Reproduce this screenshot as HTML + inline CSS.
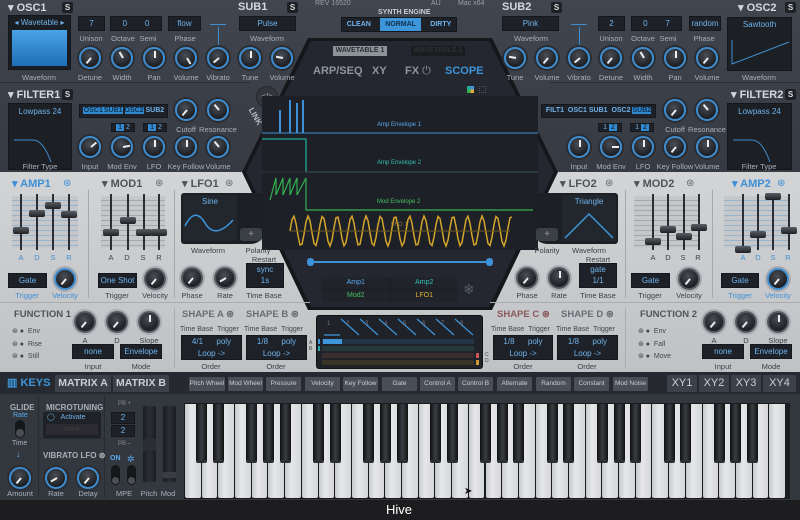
<!DOCTYPE html>
<html><head><meta charset="utf-8"><style>
*{box-sizing:border-box;margin:0;padding:0}
body{width:800px;height:520px;overflow:hidden;background:#1d1d1f;font-family:"Liberation Sans",sans-serif;position:relative}
.a{position:absolute}
.top{left:0;top:0;width:800px;height:174px;background:linear-gradient(#41464e,#363a42)}
.mid{left:0;top:172px;width:800px;height:200px;background:linear-gradient(#d2d4d6,#bfc1c4)}
.h{position:absolute;font-weight:bold;font-size:11px;color:#d4d8de;white-space:nowrap}
.hd{color:#50545a}
.hb{color:#3d8fd6}
.s{position:absolute;width:11px;height:11px;background:#1e2126;color:#ddd;font-size:8px;font-weight:bold;text-align:center;line-height:11px;border-radius:2px}
.box{position:absolute;background:#1e2228;border:1px solid #14171b;color:#6fb3ec;font-size:8px;text-align:center;white-space:nowrap}
.lb{position:absolute;font-size:7.5px;color:#a9b0b9;text-align:center;white-space:nowrap;transform:translateX(-50%)}
.ld{color:#3c4046}
.lbb{color:#3d8fd6}
.k{position:absolute;width:22px;height:22px;border-radius:50%;border:2px solid #3e8dd0;background:radial-gradient(circle at 45% 35%,#4a4e55,#1d1f23 70%);box-shadow:0 0 0 2px #2a2e34}
.kl{border-color:#55595f;box-shadow:0 0 0 2px #a9acb0}
.kl.bl{border-color:#3e8dd0}
.k i{position:absolute;left:9px;top:2px;width:2px;height:7px;background:#eee;transform-origin:1px 7px}
.fd{position:absolute;width:2px;background:#2a2d32}
.fh{position:absolute;width:16px;height:7px;background:linear-gradient(#5a5e64,#1e2024);border-radius:2px;margin-left:-7px}
.tb{position:absolute;height:14px;top:377px;background:#4a4f57;color:#c9ced6;font-size:6.5px;text-align:center;line-height:14px;border-radius:1px;white-space:nowrap;overflow:hidden}
</style></head><body>
<div class="a top"></div>
<div class="a mid"></div>
<div class="a" style="left:0;top:82px;width:250px;height:1px;background:#2b2f35"></div>
<div class="a" style="left:550px;top:82px;width:250px;height:1px;background:#2b2f35"></div>

<!-- OSC1 -->
<div class="h" style="left:8px;top:1px">▾ OSC1</div><div class="s" style="left:62px;top:2px">S</div>
<div class="box" style="left:8px;top:15px;width:63px;height:55px;background:#1a1d22"><div style="color:#6fb3ec;font-size:8px;margin-top:2px">◂ Wavetable ▸</div><div style="margin:3px 3px;height:36px;background:linear-gradient(#4aa3e6,#1e6fb6)"></div></div>
<div class="lb" style="left:39px;top:73px">Waveform</div>
<div class="box" style="left:78px;top:16px;width:27px;height:15px;line-height:13px">7</div>
<div class="box" style="left:110px;top:16px;width:52px;height:15px;line-height:13px">0&nbsp;&nbsp;&nbsp;&nbsp;&nbsp;&nbsp;&nbsp;&nbsp;0</div>
<div class="box" style="left:168px;top:16px;width:33px;height:15px;line-height:13px">flow</div>
<div class="box" style="left:239px;top:16px;width:57px;height:15px;line-height:13px">Pulse</div>
<div class="h" style="left:238px;top:1px">SUB1</div><div class="s" style="left:287px;top:2px">S</div>
<div class="lb" style="left:91px;top:34px">Unison</div><div class="lb" style="left:123px;top:34px">Octave</div><div class="lb" style="left:148px;top:34px">Semi</div><div class="lb" style="left:185px;top:34px">Phase</div><div class="lb" style="left:267px;top:34px">Waveform</div>
<div class="a" style="left:218px;top:27px;width:1px;height:20px;background:#3e8dd0"></div>
<div class="a" style="left:210px;top:24px;width:16px;height:1px;background:#3e8dd0"></div>

<!-- FILTER1 -->
<div class="h" style="left:8px;top:88px">▾ FILTER1</div><div class="s" style="left:62px;top:89px">S</div>
<div class="box" style="left:8px;top:103px;width:64px;height:67px;background:#1c1f24"><div style="margin-top:3px">Lowpass 24</div><svg width="60" height="44" style="position:absolute;left:2px;top:20px"><path d="M3 16 H22 Q32 16 40 38" stroke="#3e8dd0" fill="none" stroke-width="1"/></svg></div>
<div class="lb" style="left:40px;top:162px">Filter Type</div>
<div class="box" style="left:79px;top:104px;width:89px;height:14px;line-height:12px;font-weight:bold;font-size:7px"><span style="background:#2f8ad2;color:#12324d;padding:0 1px">OSC1</span><span style="background:#2f8ad2;color:#12324d">SUB1</span> <span style="background:#2f8ad2;color:#12324d">OSC2</span> SUB2</div>
<div class="box" style="left:111px;top:123px;width:24px;height:9px;line-height:8px;font-size:7px"><span style="background:#2f8ad2;color:#111;padding:0 2px">1</span> 2</div>
<div class="box" style="left:143px;top:123px;width:24px;height:9px;line-height:8px;font-size:7px"><span style="background:#2f8ad2;color:#111;padding:0 2px">1</span> 2</div>
<div class="a" style="left:256px;top:86px;width:22px;height:22px;border-radius:50%;background:#33373d;border:1px solid #24272c;color:#aaa;font-size:8px;text-align:center;line-height:20px">&lt;/&gt;</div>
<div class="a" style="left:246px;top:112px;font-size:8px;font-weight:bold;color:#b8bdc4;transform:rotate(60deg)">LINK</div>

<!-- OSC2 mirror -->
<div class="h" style="left:738px;top:1px">▾ OSC2</div><div class="s" style="left:785px;top:2px">S</div>
<div class="box" style="left:727px;top:17px;width:65px;height:54px;background:#1c1f24"><div style="margin-top:2px">Sawtooth</div><svg width="62" height="36" style="position:absolute;left:1px;top:14px"><path d="M3 32 V8 V32 L60 10" stroke="#3e8dd0" fill="none"/></svg></div>
<div class="lb" style="left:759px;top:73px">Waveform</div>
<div class="h" style="left:502px;top:1px">SUB2</div><div class="s" style="left:551px;top:2px">S</div>
<div class="box" style="left:502px;top:16px;width:57px;height:15px;line-height:13px">Pink</div>
<div class="box" style="left:598px;top:16px;width:27px;height:15px;line-height:13px">2</div>
<div class="box" style="left:631px;top:16px;width:51px;height:15px;line-height:13px">0&nbsp;&nbsp;&nbsp;&nbsp;&nbsp;&nbsp;&nbsp;&nbsp;7</div>
<div class="box" style="left:689px;top:16px;width:32px;height:15px;line-height:13px">random</div>
<div class="lb" style="left:531px;top:34px">Waveform</div><div class="lb" style="left:611px;top:34px">Unison</div><div class="lb" style="left:643px;top:34px">Octave</div><div class="lb" style="left:668px;top:34px">Semi</div><div class="lb" style="left:704px;top:34px">Phase</div>
<div class="a" style="left:579px;top:27px;width:1px;height:20px;background:#3e8dd0"></div>
<div class="a" style="left:571px;top:24px;width:16px;height:1px;background:#3e8dd0"></div>
<div class="h" style="left:731px;top:88px">▾ FILTER2</div><div class="s" style="left:785px;top:89px">S</div>
<div class="box" style="left:727px;top:103px;width:65px;height:67px;background:#1c1f24"><div style="margin-top:3px">Lowpass 24</div><svg width="60" height="44" style="position:absolute;left:2px;top:20px"><path d="M3 16 H22 Q32 16 40 38" stroke="#3e8dd0" fill="none"/></svg></div>
<div class="lb" style="left:759px;top:162px">Filter Type</div>
<div class="box" style="left:541px;top:104px;width:115px;height:14px;line-height:12px;font-weight:bold;font-size:7px">FILT1 &nbsp;OSC1 SUB1 &nbsp;OSC2 <span style="background:#2f8ad2;color:#12324d">SUB2</span></div>
<div class="box" style="left:598px;top:123px;width:24px;height:9px;line-height:8px;font-size:7px">1 <span style="background:#2f8ad2;color:#111;padding:0 2px">2</span></div>
<div class="box" style="left:630px;top:123px;width:24px;height:9px;line-height:8px;font-size:7px">1 <span style="background:#2f8ad2;color:#111;padding:0 2px">2</span></div>

<!-- center header -->
<div class="a" style="left:315px;top:0;font-size:7px;color:#9aa1a9">REV 16520</div>
<div class="a" style="left:431px;top:0;font-size:7px;color:#9aa1a9">AU</div>
<div class="a" style="left:458px;top:0;font-size:7px;color:#9aa1a9">Mac x64</div>
<div class="a" style="left:378px;top:9px;font-size:7px;font-weight:bold;color:#c8cdd4">SYNTH ENGINE</div>
<div class="box" style="left:341px;top:17px;width:116px;height:15px;font-weight:bold;font-size:7px;line-height:13px;display:flex;justify-content:space-around;align-items:center"><span>CLEAN</span><span style="background:#3d95da;color:#12324d;padding:0 5px">NORMAL</span><span>DIRTY</span></div>

<!-- hexagon -->
<svg class="a" style="left:0;top:0" width="800" height="372">
<polygon points="308,38 492,38 558,172 492,310 308,310 242,172" fill="#15171b"/>
<polygon points="311,41 489,41 554,172 489,307 311,307 246,172" fill="#24272f"/>
<rect x="262" y="96" width="276" height="154" fill="#1d2027"/>
<line x1="262" y1="133" x2="538" y2="133" stroke="#3d8fd6"/>
<path d="M280 133 V110 M290 133 V100 M297 133 V103 M303 133 V100 V133" stroke="#3d8fd6" stroke-width="2"/>
<path d="M262 139 H306 V172 H538" stroke="#23a89a" fill="none" stroke-width="1.3"/>
<line x1="262" y1="172" x2="538" y2="172" stroke="#333"/>
<path d="M270 200 L276 178 L276 195 L283 178 L283 195 L290 178 L290 195 L297 178 L297 195 L306 178 V210 H538" stroke="#35b04e" fill="none" stroke-width="1.2"/>
<path id="sn" d="" stroke="#d4a52a" fill="none" stroke-width="1.5"/>
<line x1="290" y1="231" x2="510" y2="231" stroke="#6b5820"/>
<line x1="312" y1="262" x2="488" y2="262" stroke="#3d8fd6" stroke-width="2"/>
<rect x="307" y="258" width="7" height="8" rx="3" fill="#3d8fd6"/><rect x="486" y="258" width="7" height="8" rx="3" fill="#3d8fd6"/>
</svg>
<div class="a" style="left:333px;top:46px;width:54px;height:10px;background:#8e9299;color:#2a2d33;font-size:7px;font-weight:bold;text-align:center;line-height:10px">WAVETABLE 1</div>
<div class="a" style="left:411px;top:46px;width:54px;height:10px;background:#1a1c20;color:#2e3238;font-size:7px;font-weight:bold;text-align:center;line-height:10px">WAVETABLE 2</div>
<div class="a" style="left:313px;top:65px;font-size:11px;font-weight:bold;color:#8f959d">ARP/SEQ</div>
<div class="a" style="left:372px;top:65px;font-size:11px;font-weight:bold;color:#8f959d">XY</div>
<div class="a" style="left:405px;top:65px;font-size:11px;font-weight:bold;color:#8f959d">FX <span style="font-weight:normal">⏻</span></div>
<div class="a" style="left:445px;top:65px;font-size:11px;font-weight:bold;color:#3d95da">SCOPE</div>
<div class="a" style="left:467px;top:86px;width:7px;height:7px;background:conic-gradient(#3d95da 0 25%,#e0b030 0 50%,#35b04e 0 75%,#23a89a 0)"></div>
<div class="a" style="left:479px;top:86px;width:7px;height:7px;border:1px dotted #555"></div>
<div class="a" style="left:377px;top:122px;font-size:6px;color:#5aaaf0">Amp Envelope 1</div>
<div class="a" style="left:377px;top:160px;font-size:6px;color:#35c0b0">Amp Envelope 2</div>
<div class="a" style="left:377px;top:199px;font-size:6px;color:#48c060">Mod Envelope 2</div>
<div class="a" style="left:391px;top:222px;font-size:6px;color:#8a7a3a">LFO 1</div>
<div class="a" style="left:322px;top:277px;width:136px;height:25px;background:#1a1c21;display:grid;grid-template-columns:1fr 1fr;font-size:7px;text-align:center;line-height:12px;gap:1px">
<div style="background:#20232a;color:#5aaaf0">Amp1</div><div style="background:#20232a;color:#35c0b0">Amp2</div><div style="background:#20232a;color:#48c060">Mod2</div><div style="background:#20232a;color:#e0b030">LFO1</div></div>
<div class="a" style="left:463px;top:281px;color:#555b63;font-size:14px">❄</div>

<!-- MID LEFT -->
<div class="h hb" style="left:12px;top:177px">▾ AMP1</div><div class="a" style="left:63px;top:178px;color:#3d8fd6;font-size:10px">⊛</div>
<div class="h hd" style="left:102px;top:177px">▾ MOD1</div><div class="a" style="left:155px;top:178px;color:#666;font-size:10px">⊛</div>
<div class="h hd" style="left:182px;top:177px">▾ LFO1</div><div class="a" style="left:225px;top:178px;color:#666;font-size:10px">⊛</div>
<div class="a" style="left:88px;top:190px;width:1px;height:108px;background:#a5a8ac"></div>
<div class="a" style="left:174px;top:190px;width:1px;height:108px;background:#a5a8ac"></div>
<div class="a" style="left:12px;top:196px;width:66px;height:52px;background:repeating-linear-gradient(#c5c7ca 0 4px,#9ab4cc 4px 5px)"></div>
<div class="a" style="left:101px;top:196px;width:64px;height:52px;background:repeating-linear-gradient(#c5c7ca 0 4px,#a6a8ab 4px 5px)"></div>
<div class="box" style="left:8px;top:273px;width:39px;height:15px;line-height:13px">Gate</div>
<div class="lb lbb" style="left:27px;top:291px">Trigger</div><div class="lb lbb" style="left:65px;top:291px">Velocity</div>
<div class="box" style="left:98px;top:273px;width:39px;height:15px;line-height:13px">One Shot</div>
<div class="lb ld" style="left:117px;top:291px">Trigger</div><div class="lb ld" style="left:155px;top:291px">Velocity</div>
<div class="a" style="left:181px;top:193px;width:84px;height:51px;background:#1c1f24;border-radius:3px 3px 14px 3px"></div>
<div class="a" style="left:183px;top:195px;width:54px;height:46px;background:#22262d;color:#6fb3ec;font-size:8px;text-align:center;padding-top:2px">Sine<svg width="54" height="34" style="display:block"><path d="M2 20 Q12 0 22 17 T50 14" stroke="#3d95da" fill="none" stroke-width="1.5"/></svg></div>
<div class="a" style="left:240px;top:228px;width:22px;height:13px;background:#3b3f46;color:#999;font-size:10px;text-align:center;line-height:13px;border-radius:3px">+</div>
<div class="lb ld" style="left:208px;top:246px">Waveform</div><div class="lb ld" style="left:258px;top:246px">Polarity</div><div class="lb ld" style="left:264px;top:255px">Restart</div>
<div class="box" style="left:246px;top:263px;width:38px;height:25px;line-height:11px">sync<br>1s</div>
<div class="lb ld" style="left:192px;top:291px">Phase</div><div class="lb ld" style="left:225px;top:291px">Rate</div><div class="lb ld" style="left:264px;top:291px">Time Base</div>

<!-- MID RIGHT -->
<div class="h hb" style="left:732px;top:177px">▾ AMP2</div><div class="a" style="left:777px;top:178px;color:#3d8fd6;font-size:10px">⊛</div>
<div class="h hd" style="left:634px;top:177px">▾ MOD2</div><div class="a" style="left:686px;top:178px;color:#666;font-size:10px">⊛</div>
<div class="h hd" style="left:560px;top:177px">▾ LFO2</div><div class="a" style="left:605px;top:178px;color:#666;font-size:10px">⊛</div>
<div class="a" style="left:625px;top:190px;width:1px;height:108px;background:#a5a8ac"></div>
<div class="a" style="left:712px;top:190px;width:1px;height:108px;background:#a5a8ac"></div>
<div class="a" style="left:634px;top:196px;width:66px;height:52px;background:repeating-linear-gradient(#c5c7ca 0 4px,#a6a8ab 4px 5px)"></div>
<div class="a" style="left:724px;top:196px;width:66px;height:52px;background:repeating-linear-gradient(#c5c7ca 0 4px,#9ab4cc 4px 5px)"></div>
<div class="box" style="left:631px;top:273px;width:39px;height:15px;line-height:13px">Gate</div>
<div class="lb ld" style="left:650px;top:291px">Trigger</div><div class="lb ld" style="left:689px;top:291px">Velocity</div>
<div class="box" style="left:721px;top:273px;width:38px;height:15px;line-height:13px">Gate</div>
<div class="lb lbb" style="left:740px;top:291px">Trigger</div><div class="lb lbb" style="left:778px;top:291px">Velocity</div>
<div class="a" style="left:533px;top:193px;width:85px;height:51px;background:#1c1f24;border-radius:3px 3px 3px 14px"></div>
<div class="a" style="left:562px;top:195px;width:54px;height:46px;background:#22262d;color:#6fb3ec;font-size:8px;text-align:center;padding-top:2px">Triangle<svg width="54" height="34" style="display:block"><path d="M3 32 L27 8 L51 32" stroke="#3d95da" fill="none" stroke-width="1.5"/></svg></div>
<div class="a" style="left:536px;top:228px;width:22px;height:13px;background:#3b3f46;color:#999;font-size:10px;text-align:center;line-height:13px;border-radius:3px">+</div>
<div class="lb ld" style="left:547px;top:246px">Polarity</div><div class="lb ld" style="left:589px;top:246px">Waveform</div><div class="lb ld" style="left:598px;top:255px">Restart</div>
<div class="box" style="left:579px;top:263px;width:38px;height:25px;line-height:11px">gate<br>1/1</div>
<div class="lb ld" style="left:527px;top:291px">Phase</div><div class="lb ld" style="left:559px;top:291px">Rate</div><div class="lb ld" style="left:598px;top:291px">Time Base</div>

<!-- FUNCTIONS -->
<div class="a" style="left:0;top:302px;width:310px;height:1px;background:#a8abaf"></div>
<div class="a" style="left:490px;top:302px;width:310px;height:1px;background:#a8abaf"></div>
<div class="h hd" style="left:14px;top:309px;font-size:9.5px">FUNCTION 1</div>
<div class="a" style="left:12px;top:326px;font-size:7px;color:#444;line-height:12.5px">⊛ ● &nbsp;Env<br>⊛ ● &nbsp;Rise<br>⊛ ● &nbsp;Still</div>
<div class="lb ld" style="left:85px;top:336px">A</div><div class="lb ld" style="left:117px;top:336px">D</div><div class="lb ld" style="left:149px;top:336px">Slope</div>
<div class="box" style="left:72px;top:344px;width:42px;height:15px;line-height:13px">none</div>
<div class="box" style="left:120px;top:344px;width:42px;height:15px;line-height:13px">Envelope</div>
<div class="lb ld" style="left:93px;top:362px">Input</div><div class="lb ld" style="left:141px;top:362px">Mode</div>
<div class="a" style="left:174px;top:308px;width:1px;height:60px;background:#a8abaf"></div>
<div class="h" style="left:182px;top:309px;font-size:9.5px;color:#6a6e74">SHAPE A ⊛</div>
<div class="h" style="left:246px;top:309px;font-size:9.5px;color:#6a6e74">SHAPE B ⊛</div>
<div class="a" style="left:180px;top:326px;font-size:7px;color:#444">Time Base &nbsp;Trigger</div>
<div class="a" style="left:244px;top:326px;font-size:7px;color:#444">Time Base &nbsp;Trigger</div>
<div class="box" style="left:181px;top:335px;width:61px;height:25px;line-height:12px">4/1 &nbsp;&nbsp;&nbsp;&nbsp;&nbsp;poly<br>Loop -&gt;</div>
<div class="box" style="left:246px;top:335px;width:61px;height:25px;line-height:12px">1/8 &nbsp;&nbsp;&nbsp;&nbsp;&nbsp;poly<br>Loop -&gt;</div>
<div class="lb ld" style="left:211px;top:362px">Order</div><div class="lb ld" style="left:276px;top:362px">Order</div>
<div class="a" style="left:316px;top:315px;width:167px;height:54px;background:#1f2228;border:1px solid #111;border-radius:3px"></div>
<svg class="a" style="left:316px;top:315px" width="167" height="54">
<g fill="none" stroke="#3d95da" stroke-width="1.2"><path d="M8 20 H24 M25 4 L43 20 M44 4 L62 20 M63 4 L81 20 M82 4 L100 20 M101 4 L119 20 M120 4 L138 20 M139 4 L157 20"/></g>
<g font-size="6" fill="#778" font-family="Liberation Sans"><text x="11" y="10">1</text><text x="30" y="10">2</text><text x="49" y="10">3</text><text x="68" y="10">4</text><text x="87" y="10">5</text><text x="106" y="10">6</text><text x="125" y="10">7</text><text x="144" y="10">8</text></g>
<rect x="6" y="24" width="152" height="5" fill="#243447"/><rect x="7" y="24" width="19" height="5" fill="#3d95da"/>
<rect x="6" y="31" width="152" height="5" fill="#26383a"/><rect x="6" y="38" width="152" height="5" fill="#3a2e2e"/><rect x="6" y="45" width="152" height="5" fill="#3a3328"/>
<rect x="2" y="24" width="2" height="5" fill="#3d95da"/><rect x="2" y="31" width="2" height="5" fill="#2aa"/><rect x="160" y="38" width="3" height="5" fill="#c55"/><rect x="160" y="45" width="3" height="5" fill="#c93"/>
</svg>
<div class="a" style="left:309px;top:340px;font-size:5px;color:#444;line-height:6px">A<br>B</div>
<div class="a" style="left:485px;top:352px;font-size:5px;color:#444;line-height:6px">C<br>D</div>
<div class="h" style="left:497px;top:309px;font-size:9.5px;color:#8a5a5a">SHAPE C ⊛</div>
<div class="h" style="left:561px;top:309px;font-size:9.5px;color:#6a6e74">SHAPE D ⊛</div>
<div class="a" style="left:491px;top:326px;font-size:7px;color:#444">Time Base &nbsp;Trigger</div>
<div class="a" style="left:556px;top:326px;font-size:7px;color:#444">Time Base &nbsp;Trigger</div>
<div class="box" style="left:493px;top:335px;width:60px;height:25px;line-height:12px">1/8 &nbsp;&nbsp;&nbsp;&nbsp;&nbsp;poly<br>Loop -&gt;</div>
<div class="box" style="left:557px;top:335px;width:61px;height:25px;line-height:12px">1/8 &nbsp;&nbsp;&nbsp;&nbsp;&nbsp;poly<br>Loop -&gt;</div>
<div class="lb ld" style="left:523px;top:362px">Order</div><div class="lb ld" style="left:587px;top:362px">Order</div>
<div class="a" style="left:625px;top:308px;width:1px;height:60px;background:#a8abaf"></div>
<div class="h hd" style="left:640px;top:309px;font-size:9.5px">FUNCTION 2</div>
<div class="a" style="left:638px;top:326px;font-size:7px;color:#444;line-height:12.5px">⊛ ● &nbsp;Env<br>⊛ ● &nbsp;Fall<br>⊛ ● &nbsp;Move</div>
<div class="lb ld" style="left:714px;top:336px">A</div><div class="lb ld" style="left:746px;top:336px">D</div><div class="lb ld" style="left:778px;top:336px">Slope</div>
<div class="box" style="left:702px;top:344px;width:42px;height:15px;line-height:13px">none</div>
<div class="box" style="left:750px;top:344px;width:42px;height:15px;line-height:13px">Envelope</div>
<div class="lb ld" style="left:723px;top:362px">Input</div><div class="lb ld" style="left:771px;top:362px">Mode</div>

<!-- KEYS BAR -->
<div class="a" style="left:0;top:372px;width:800px;height:22px;background:#262a30"></div>
<div class="a" style="left:7px;top:376px;font-size:11px;font-weight:bold;color:#3d95da">▥ KEYS</div>
<div class="a" style="left:55px;top:375px;width:56px;height:17px;background:#3c4149;color:#c9ced6;font-size:10.5px;font-weight:bold;text-align:center;line-height:17px">MATRIX A</div>
<div class="a" style="left:113px;top:375px;width:56px;height:17px;background:#3c4149;color:#c9ced6;font-size:10.5px;font-weight:bold;text-align:center;line-height:17px">MATRIX B</div>
<div class="tb" style="left:189px;width:36px">Pitch Wheel</div>
<div class="tb" style="left:228px;width:35px">Mod Wheel</div>
<div class="tb" style="left:266px;width:35px">Pressure</div>
<div class="tb" style="left:305px;width:35px">Velocity</div>
<div class="tb" style="left:343px;width:35px">Key Follow</div>
<div class="tb" style="left:382px;width:35px">Gate</div>
<div class="tb" style="left:420px;width:35px">Control A</div>
<div class="tb" style="left:458px;width:35px">Control B</div>
<div class="tb" style="left:497px;width:35px">Alternate</div>
<div class="tb" style="left:536px;width:35px">Random</div>
<div class="tb" style="left:574px;width:35px">Constant</div>
<div class="tb" style="left:613px;width:35px">Mod Noise</div>
<div class="a" style="left:667px;top:375px;width:30px;height:17px;background:#3c4149;color:#c9ced6;font-size:11px;text-align:center;line-height:17px">XY1</div>
<div class="a" style="left:699px;top:375px;width:30px;height:17px;background:#3c4149;color:#c9ced6;font-size:11px;text-align:center;line-height:17px">XY2</div>
<div class="a" style="left:731px;top:375px;width:30px;height:17px;background:#3c4149;color:#c9ced6;font-size:11px;text-align:center;line-height:17px">XY3</div>
<div class="a" style="left:763px;top:375px;width:33px;height:17px;background:#3c4149;color:#c9ced6;font-size:11px;text-align:center;line-height:17px">XY4</div>

<!-- BOTTOM -->
<div class="a" style="left:0;top:394px;width:800px;height:106px;background:#33373e"></div>
<div class="a" style="left:38px;top:396px;width:1px;height:102px;background:#282b30"></div>
<div class="a" style="left:104px;top:396px;width:1px;height:102px;background:#282b30"></div>
<div class="a" style="left:40px;top:438px;width:64px;height:1px;background:#282b30"></div>
<div class="a" style="left:10px;top:403px;font-size:8px;font-weight:bold;color:#a9b0b9">GLIDE</div>
<div class="a" style="left:13px;top:412px;font-size:7px;color:#5aaaf0">Rate</div>
<div class="a" style="left:15px;top:420px;width:10px;height:18px;background:#15171a;border-radius:5px"><div style="width:8px;height:8px;margin:9px 1px;border-radius:50%;background:#4a4e55"></div></div>
<div class="a" style="left:12px;top:440px;font-size:7px;color:#a9b0b9">Time</div>
<div class="a" style="left:16px;top:449px;font-size:9px;color:#5aaaf0">↓</div>
<div class="lb" style="left:20px;top:489px">Amount</div>
<div class="a" style="left:46px;top:403px;font-size:8px;font-weight:bold;color:#a9b0b9">MICROTUNING</div>
<div class="a" style="left:43px;top:412px;width:58px;height:26px;background:#1e2126;border-radius:2px;font-size:7px;color:#6fb3ec;line-height:11px"><div style="padding-left:4px">◯ &nbsp;&nbsp;Activate</div><div style="background:#2a2a30;margin:1px 3px;text-align:center;color:#444">none</div></div>
<div class="a" style="left:43px;top:451px;font-size:8px;font-weight:bold;color:#a9b0b9">VIBRATO LFO ⊛</div>
<div class="lb" style="left:56px;top:489px">Rate</div><div class="lb" style="left:88px;top:489px">Delay</div>
<div class="a" style="left:118px;top:401px;font-size:6px;color:#888">PB +</div>
<div class="box" style="left:111px;top:412px;width:24px;height:12px;line-height:10px">2</div>
<div class="box" style="left:111px;top:425px;width:24px;height:12px;line-height:10px">2</div>
<div class="a" style="left:118px;top:441px;font-size:6px;color:#888">PB –</div>
<div class="a" style="left:110px;top:455px;font-size:7px;font-weight:bold;color:#5aaaf0">ON</div>
<div class="a" style="left:127px;top:454px;font-size:9px;color:#5aaaf0">✲</div>
<div class="a" style="left:111px;top:465px;width:9px;height:20px;background:#15171a;border-radius:5px"><div style="width:7px;height:7px;margin:12px 1px;border-radius:50%;background:#4a4e55"></div></div>
<div class="a" style="left:127px;top:465px;width:9px;height:20px;background:#15171a;border-radius:5px"><div style="width:7px;height:7px;margin:12px 1px;border-radius:50%;background:#4a4e55"></div></div>
<div class="lb" style="left:124px;top:489px">MPE</div>
<div class="a" style="left:143px;top:406px;width:13px;height:76px;background:linear-gradient(90deg,#1a1c20,#2c2f34,#1a1c20);border-radius:2px"><div style="margin-top:33px;height:12px;background:#2a2d32"></div></div>
<div class="a" style="left:163px;top:406px;width:13px;height:76px;background:linear-gradient(90deg,#1a1c20,#2c2f34,#1a1c20);border-radius:2px"><div style="margin-top:66px;height:6px;background:#3a3d42"></div></div>
<div class="lb" style="left:149px;top:489px">Pitch</div><div class="lb" style="left:168px;top:489px">Mod</div>
<div class="a" id="kb" style="left:184px;top:403px;width:606px;height:96px;background:#1a1b1e"></div>

<div class="a" style="left:0;top:500px;width:800px;height:20px;background:#1d1d1f"></div>
<div class="a" style="left:386px;top:502px;font-size:13px;color:#fff">Hive</div>
<div class="a" style="left:464px;top:486px;font-size:10px;color:#111">➤</div>
<div id="kn"></div>
<script>
var kb=document.getElementById('kb'),h='',w=601/36;
for(var i=0;i<36;i++){h+='<div style="position:absolute;left:'+(1+i*w)+'px;top:1px;width:'+(w-1)+'px;height:94px;background:linear-gradient(90deg,#c7c9cc,#e6e7e8 40%,#d5d6d8);border-radius:0 0 2px 2px"></div>';}
var bl=[1,1,0,1,1,1,0];
for(var i=0;i<35;i++){if(bl[i%7]){h+='<div style="position:absolute;left:'+(1+(i+1)*w-5.5)+'px;top:1px;width:11px;height:59px;background:linear-gradient(90deg,#0f1012,#3a3d42 50%,#111);border-radius:0 0 2px 2px;border-bottom:3px solid #2c2e32"></div>';}}
kb.innerHTML=h;
var d='M290 231';for(var x=290;x<=512;x+=2){d+=' L'+x+' '+(231-15*Math.sin((x-290)/14.5*Math.PI*2))}document.getElementById('sn').setAttribute('d',d);
var K=[
[90,58,'Detune',-140],[122,58,'Width',-30],[154,58,'Pan',0],[186,58,'Volume',150],[218,58,'Vibrato',-130],[250,58,'Tune',0],[282,58,'Volume',-80],
[186,110,'Cutoff',-140],[218,110,'Resonance',-40],
[90,147,'Input',50],[122,147,'Mod Env',80],[154,147,'LFO',0],[186,147,'Key Follow',0],[218,147,'Volume',-40],
[515,58,'Tune',-80],[547,58,'Volume',-140],[579,58,'Vibrato',-130],[611,58,'Detune',-140],[643,58,'Width',-30],[675,58,'Pan',0],[707,58,'Volume',-140],
[675,110,'Cutoff',-140],[707,110,'Resonance',-40],
[579,147,'Input',0],[611,147,'Mod Env',90],[643,147,'LFO',0],[675,147,'Key Follow',-140],[707,147,'Volume',0]];
var o='';
function kn(x,y,a,c){return '<div class="k '+c+'" style="left:'+(x-11)+'px;top:'+(y-11)+'px"><i style="transform:rotate('+a+'deg)"></i></div>'}
K.forEach(function(k){o+=kn(k[0],k[1],k[3],'')+'<div class="lb" style="left:'+k[0]+'px;top:'+(k[1]+15)+'px">'+k[2]+'</div>'});
[[65,279,-140,'kl bl'],[155,279,-140,'kl'],[192,278,-140,'kl'],[225,278,-120,'kl'],[527,278,-140,'kl'],[559,278,0,'kl'],[689,279,-140,'kl'],[778,279,-140,'kl bl'],
[85,322,-140,'kl'],[117,322,-140,'kl'],[149,322,0,'kl'],[714,322,-140,'kl'],[746,322,-140,'kl'],[778,322,0,'kl'],
[20,478,-140,''],[56,478,-120,''],[88,478,-140,'']].forEach(function(k){o+=kn(k[0],k[1],k[2],k[3])});
function fd(x,hy){return '<div class="fd" style="left:'+x+'px;top:194px;height:56px"></div><div class="fh" style="left:'+x+'px;top:'+hy+'px"></div>'}
[[20,227],[36,210],[52,202],[68,211],[110,229],[127,217],[143,229],[158,229],[652,238],[667,226],[683,233],[698,224],[742,246],[757,231],[772,193],[788,227]].forEach(function(f){o+=fd(f[0],f[1])});
['A','D','S','R'].forEach(function(l,i){o+='<div class="lb lbb" style="left:'+(21+i*16)+'px;top:253px">'+l+'</div><div class="lb ld" style="left:'+(111+i*16)+'px;top:253px">'+l+'</div><div class="lb ld" style="left:'+(653+i*15)+'px;top:253px">'+l+'</div><div class="lb lbb" style="left:'+(743+i*15)+'px;top:253px">'+l+'</div>'});
document.getElementById('kn').innerHTML=o;
</script>
</body></html>
